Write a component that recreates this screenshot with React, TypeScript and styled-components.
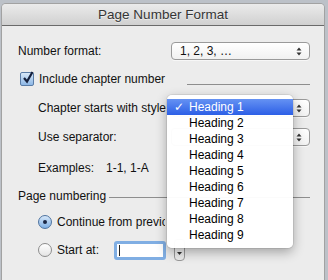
import React from "react";
import styled, { createGlobalStyle, css } from "styled-components";

const GlobalStyle = createGlobalStyle`
  html, body { margin: 0; padding: 0; }
  body {
    width: 328px;
    height: 280px;
    overflow: hidden;
    background: #bcc1c8;
    font-family: "Liberation Sans", Arial, sans-serif;
    font-size: 12px;
    color: #111;
  }
`;

const Dialog = styled.div`
  position: relative;
  margin: 4px 0 0 2px;
  width: 322px;
  height: 276px;
  background: #ececec;
  border-radius: 4px 4px 0 0;
  box-shadow: 0 0 0 1px #a2a2a2;
`;

const TitleBar = styled.div`
  height: 21px;
  line-height: 21px;
  text-align: center;
  font-size: 13.5px;
  color: #353535;
  text-shadow: 0 1px 0 rgba(255, 255, 255, 0.55);
  background: linear-gradient(#ebebeb, #d0d0d0);
  border-radius: 4px 4px 0 0;
  border-bottom: 1px solid #6a6a6a;
`;

const Body = styled.div`
  display: flex;
  flex-direction: column;
  padding: 16px 14px 0 16px;
`;

const Row = styled.div<{ $top?: number; $indent?: number; $h?: number }>`
  display: flex;
  align-items: center;
  height: ${p => p.$h ?? 18}px;
  margin-top: ${p => p.$top ?? 0}px;
  padding-left: ${p => p.$indent ?? 0}px;
  white-space: nowrap;
`;

const Label = styled.span<{ $w?: number; $gap?: number; $clip?: boolean }>`
  margin-left: ${p => p.$gap ?? 0}px;
  ${p => p.$w && css`width: ${p.$w}px; flex: none;`}
  ${p => p.$clip && css`overflow: hidden;`}
`;

const Rule = styled.div<{ $gap: number; $drop: number }>`
  flex: 1;
  height: 1px;
  background: #8e8e8e;
  margin-left: ${p => p.$gap}px;
  margin-top: ${p => p.$drop}px;
`;

const Popup = styled.div`
  margin-left: auto;
  width: 139px;
  height: 18px;
  box-sizing: border-box;
  display: flex;
  align-items: center;
  padding: 0 7px 0 8px;
  border: 1px solid #9a9a9a;
  border-radius: 4px;
  background: linear-gradient(#ffffff, #f1f1f1);
  box-shadow: 0 1px 0 rgba(255, 255, 255, 0.6);
`;

const PopupText = styled.span`
  flex: 1;
`;

const Arrows = () => (
  <svg width="6" height="9" viewBox="0 0 6 9">
    <path d="M0.5 3.5 L3 0.5 L5.5 3.5 Z M0.5 5.5 L3 8.5 L5.5 5.5 Z" fill="#333" />
  </svg>
);

const CheckBox = styled.span`
  position: relative;
  width: 12px;
  height: 12px;
  margin-left: 2px;
  flex: none;
  border: 1px solid #5a7ca6;
  border-radius: 2px;
  background: linear-gradient(#d8e8f8, #8db7e6);
`;

const CheckMark = styled.svg`
  position: absolute;
  left: 1px;
  top: -2px;
`;

const Radio = styled.span<{ $on?: boolean }>`
  width: 14px;
  height: 14px;
  box-sizing: border-box;
  flex: none;
  border-radius: 50%;
  display: flex;
  align-items: center;
  justify-content: center;
  border: 1px solid ${p => (p.$on ? "#4f74a0" : "#8c8c8c")};
  background: ${p =>
    p.$on ? "linear-gradient(#d6e7f9, #7eafe5)" : "linear-gradient(#ffffff, #e4e4e4)"};
  &::after {
    content: "";
    display: ${p => (p.$on ? "block" : "none")};
    width: 4px;
    height: 4px;
    border-radius: 50%;
    background: #1a2644;
  }
`;

const TextField = styled.div`
  width: 52px;
  height: 19px;
  box-sizing: border-box;
  flex: none;
  border: 3px solid #80aee3;
  border-radius: 3px;
  background: #fff;
  display: flex;
  align-items: center;
  padding-left: 2px;
  &::before {
    content: "";
    width: 1px;
    height: 11px;
    background: #222;
  }
`;

const Stepper = styled.div`
  width: 11px;
  height: 22px;
  margin-left: 8px;
  box-sizing: border-box;
  flex: none;
  border: 1px solid #9a9a9a;
  border-radius: 4px;
  background: linear-gradient(#fbfbfb, #e9e9e9);
  display: flex;
  align-items: flex-end;
  justify-content: center;
  padding-bottom: 5px;
`;

const Menu = styled.div`
  position: absolute;
  left: 165px;
  top: 91px;
  width: 126px;
  padding: 4px 0 5px;
  background: rgba(255, 255, 255, 0.97);
  border-radius: 5px;
  box-shadow: 0 4px 12px rgba(0, 0, 0, 0.32), 0 0 0 1px rgba(0, 0, 0, 0.07);
`;

const MenuItem = styled.div<{ $active?: boolean }>`
  position: relative;
  height: 16px;
  line-height: 16px;
  padding-left: 22px;
  font-size: 12px;
  color: #000;
  ${p =>
    p.$active &&
    css`
      color: #fff;
      background: linear-gradient(#6592f3, #2c5fe6);
    `}
`;

const Tick = styled.span`
  position: absolute;
  left: 7px;
  top: 0;
  font-family: "DejaVu Sans", sans-serif;
  font-size: 12px;
  font-weight: bold;
`;

const headings = [1, 2, 3, 4, 5, 6, 7, 8, 9];

export default function App() {
  return (
    <>
      <GlobalStyle />
      <Dialog>
        <TitleBar>Page Number Format</TitleBar>
        <Body>
          <Row>
            <Label>Number format:</Label>
            <Popup>
              <PopupText>1, 2, 3, …</PopupText>
              <Arrows />
            </Popup>
          </Row>
          <Row $top={10}>
            <CheckBox>
              <CheckMark width="12" height="13" viewBox="0 0 12 13">
                <path d="M2 7 L5 10.5 L10.5 1" stroke="#16213d" strokeWidth="2.2" fill="none" />
              </CheckMark>
            </CheckBox>
            <Label $gap={5}>Include chapter number</Label>
            <Rule $gap={22} $drop={10} />
          </Row>
          <Row $top={11} $indent={20}>
            <Label $w={128} $clip>Chapter starts with style</Label>
            <Popup>
              <PopupText />
              <Arrows />
            </Popup>
          </Row>
          <Row $top={11} $indent={20}>
            <Label>Use separator:</Label>
            <Popup>
              <PopupText />
              <Arrows />
            </Popup>
          </Row>
          <Row $top={13} $indent={20}>
            <Label $w={68}>Examples:</Label>
            <Label>1-1, 1-A</Label>
          </Row>
          <Row $top={10}>
            <Label>Page numbering</Label>
            <Rule $gap={3} $drop={2} />
          </Row>
          <Row $top={8} $indent={20}>
            <Radio $on />
            <Label $gap={5} $w={108} $clip>Continue from previous</Label>
          </Row>
          <Row $top={9} $indent={20} $h={20}>
            <Radio />
            <Label $gap={5} $w={57}>Start at:</Label>
            <TextField />
            <Stepper>
              <svg width="5" height="3" viewBox="0 0 5 3">
                <path d="M0 0 L5 0 L2.5 3 Z" fill="#333" />
              </svg>
            </Stepper>
          </Row>
        </Body>
        <Menu>
          {headings.map(n => (
            <MenuItem key={n} $active={n === 1}>
              {n === 1 && <Tick>✓</Tick>}
              Heading {n}
            </MenuItem>
          ))}
        </Menu>
      </Dialog>
    </>
  );
}
